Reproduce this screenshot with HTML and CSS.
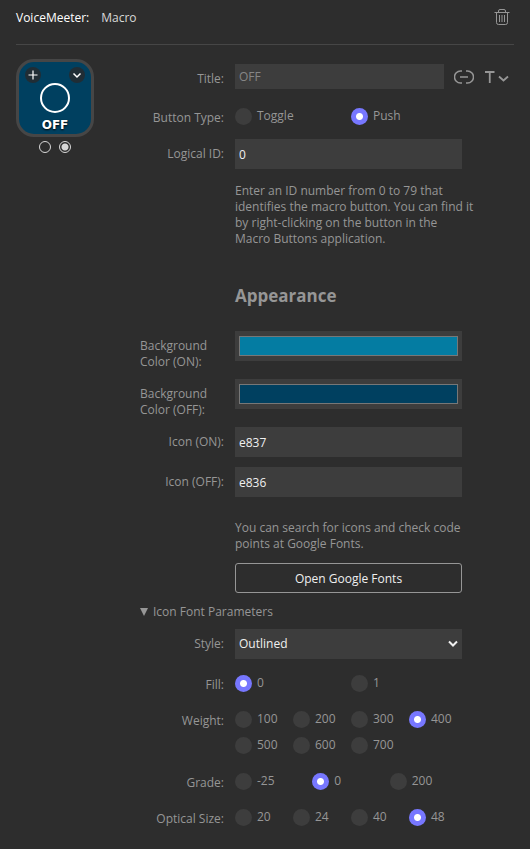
FILE: index.html
```html
<!DOCTYPE html>
<html lang="en">
<head>
<meta charset="utf-8">
<meta name="viewport" content="width=device-width, initial-scale=1">
<title>VoiceMeeter: Macro</title>
<link rel="stylesheet" href="styles.css">
</head>
<body>
<header class="header">
  <h1 class="crumb"><span class="crumb-plugin">VoiceMeeter:</span><span class="crumb-action">Macro</span></h1>
  <button class="icon-button" type="button" aria-label="Delete">
    <svg width="16" height="18" viewBox="0 0 16 18" fill="none" stroke="currentColor"><path d="M0.5 3.500h15M4.500 3V2a1.500 1.500 0 0 1 1.500-1.500h4a1.500 1.500 0 0 1 1.500 1.500V3M2.500 3.500v10a2 2 0 0 0 2 2h7a2 2 0 0 0 2-2v-10M5.500 6v7M8 6v7M10.500 6v7"/></svg>
  </button>
</header>
<main class="inspector">
  <section class="preview">
    <div class="key">
      <div class="key-tools">
        <button class="key-tool" type="button" aria-label="Add"><svg width="16" height="16" viewBox="0 0 16 16" fill="none" stroke="currentColor" stroke-width="1.200"><path d="M8 3.500v9M3.500 8h9"/></svg></button>
        <button class="key-tool" type="button" aria-label="Icon menu"><svg width="16" height="16" viewBox="0 0 16 16" fill="none" stroke="currentColor" stroke-width="1.500"><path d="M4.500 6.500L8 10l3.500-3.500"/></svg></button>
      </div>
      <svg class="key-icon" width="32" height="32" viewBox="0 0 32 32" fill="none" stroke="#fff" stroke-width="2"><circle cx="16" cy="16" r="14"/></svg>
      <span class="key-title">OFF</span>
    </div>
    <div class="states">
      <input class="state" type="radio" name="state" aria-label="State 1">
      <input class="state" type="radio" name="state" aria-label="State 2" checked>
    </div>
  </section>
  <form class="form">
    <div class="row title-row">
      <label class="label" for="title">Title:</label>
      <div class="title-field">
        <input class="input title-input" id="title" type="text" placeholder="OFF">
        <button class="icon-button" type="button" aria-label="Link title"><svg width="20" height="14" viewBox="0 0 20 14" fill="none" stroke="currentColor" stroke-width="1.500"><path d="M8 1H6.500a6 6 0 0 0 0 12H8M12 1h1.500a6 6 0 0 1 0 12H12M6 7h8"/></svg></button>
        <button class="icon-button" type="button" aria-label="Text style"><svg width="26" height="14" viewBox="0 0 26 14" fill="none" stroke="currentColor" stroke-width="1.800"><path d="M1 2h9.500M5.750 2v11M15 6.500l4.500 4 4.500-4"/></svg></button>
      </div>
    </div>
    <div class="row" role="radiogroup" aria-labelledby="l-type">
      <span class="label" id="l-type">Button Type:</span>
      <div class="radios two">
        <label class="choice"><input class="radio" type="radio" name="type">Toggle</label>
        <label class="choice"><input class="radio" type="radio" name="type" checked>Push</label>
      </div>
    </div>
    <div class="row">
      <label class="label" for="logical">Logical ID:</label>
      <input class="input" id="logical" type="text" value="0">
    </div>
    <p class="help id-help">Enter an ID number from 0 to 79 that<br>identifies the macro button. You can find it<br>by right-clicking on the button in the<br>Macro Buttons application.</p>
    <h2 class="heading">Appearance</h2>
    <div class="row">
      <label class="label" for="bg-on">Background Color (ON):</label>
      <input class="color" id="bg-on" type="color" value="#047ca2">
    </div>
    <div class="row">
      <label class="label" for="bg-off">Background Color (OFF):</label>
      <input class="color" id="bg-off" type="color" value="#004060">
    </div>
    <div class="row">
      <label class="label" for="icon-on">Icon (ON):</label>
      <input class="input" id="icon-on" type="text" value="e837">
    </div>
    <div class="row">
      <label class="label" for="icon-off">Icon (OFF):</label>
      <input class="input" id="icon-off" type="text" value="e836">
    </div>
    <p class="help icon-help">You can search for icons and check code points at Google Fonts.</p>
    <div class="row">
      <button class="button" type="button">Open Google Fonts</button>
    </div>
    <details class="params" open>
      <summary class="summary"><svg width="8" height="8" viewBox="0 0 8 8" fill="currentColor"><path d="M0 0h8L4 8z"/></svg>Icon Font Parameters</summary>
      <div class="row">
        <label class="label" for="style">Style:</label>
        <div class="select-wrap">
          <select class="input select" id="style"><option>Outlined</option><option>Rounded</option><option>Sharp</option></select>
          <svg class="select-arrow" width="10" height="8" viewBox="0 0 10 8" fill="none" stroke="currentColor" stroke-width="2"><path d="M1 1.500l4 4 4-4"/></svg>
        </div>
      </div>
      <div class="row" role="radiogroup" aria-labelledby="l-fill">
        <span class="label" id="l-fill">Fill:</span>
        <div class="radios two">
          <label class="choice"><input class="radio" type="radio" name="fill" checked>0</label>
          <label class="choice"><input class="radio" type="radio" name="fill">1</label>
        </div>
      </div>
      <div class="row" role="radiogroup" aria-labelledby="l-weight">
        <span class="label" id="l-weight">Weight:</span>
        <div class="radios four">
          <label class="choice"><input class="radio" type="radio" name="weight">100</label>
          <label class="choice"><input class="radio" type="radio" name="weight">200</label>
          <label class="choice"><input class="radio" type="radio" name="weight">300</label>
          <label class="choice"><input class="radio" type="radio" name="weight" checked>400</label>
          <label class="choice"><input class="radio" type="radio" name="weight">500</label>
          <label class="choice"><input class="radio" type="radio" name="weight">600</label>
          <label class="choice"><input class="radio" type="radio" name="weight">700</label>
        </div>
      </div>
      <div class="row" role="radiogroup" aria-labelledby="l-grade">
        <span class="label" id="l-grade">Grade:</span>
        <div class="radios three">
          <label class="choice"><input class="radio" type="radio" name="grade">-25</label>
          <label class="choice"><input class="radio" type="radio" name="grade" checked>0</label>
          <label class="choice"><input class="radio" type="radio" name="grade">200</label>
        </div>
      </div>
      <div class="row" role="radiogroup" aria-labelledby="l-size">
        <span class="label" id="l-size">Optical Size:</span>
        <div class="radios four">
          <label class="choice"><input class="radio" type="radio" name="size">20</label>
          <label class="choice"><input class="radio" type="radio" name="size">24</label>
          <label class="choice"><input class="radio" type="radio" name="size">40</label>
          <label class="choice"><input class="radio" type="radio" name="size" checked>48</label>
        </div>
      </div>
    </details>
  </form>
</main>
</body>
</html>
```
FILE: styles.css
```css
* {
  box-sizing: border-box;
}

body {
  margin: 0;
  padding: 0 16px;
  background: #2d2d2d;
  color: #969696;
  font: 12px/16px "Segoe UI", "Open Sans", "Noto Sans", sans-serif;
}

button,
input,
select {
  margin: 0;
  font: inherit;
}

.header {
  display: flex;
  align-items: center;
  justify-content: space-between;
  padding: 9px 4px 17px 0;
  border-bottom: 1px solid #464646;
}

.crumb {
  display: flex;
  gap: 12px;
  margin: 0;
  font-size: 12px;
  color: #d8d8d8;
}

.crumb-plugin {
  font-weight: 500;
  color: #fff;
}

.crumb-action {
  font-weight: 400;
}

.icon-button {
  display: flex;
  flex: none;
  padding: 0;
  border: 0;
  background: none;
  color: #969696;
}

.inspector {
  display: flex;
  gap: 46px;
  padding-top: 14px;
}

.preview {
  flex: none;
}

.key {
  display: flex;
  flex-direction: column;
  align-items: center;
  width: 78px;
  height: 78px;
  padding: 5px 6px;
  border: 3px solid #464646;
  border-radius: 18px;
  background: #004060;
}

.key-tools {
  display: flex;
  justify-content: space-between;
  align-self: stretch;
}

.key-tool {
  display: flex;
  padding: 0;
  border: 0;
  border-radius: 50%;
  background: #202d35;
  color: #fff;
}

.key-icon {
  flex: none;
  margin-top: -1px;
}

.key-title {
  margin-top: 2px;
  font: 700 12px/18px "DejaVu Sans", sans-serif;
  color: #fff;
  text-shadow: 0 1px 2px #000;
}

.states {
  display: flex;
  justify-content: center;
  gap: 8px;
  padding-top: 4px;
}

.state {
  appearance: none;
  width: 12px;
  height: 12px;
  border: 1px solid #d8d8d8;
  border-radius: 50%;
}

.state:checked {
  background: radial-gradient(circle, #d8d8d8 3px, transparent 4px);
}

.form {
  flex: 1;
  min-width: 0;
  padding: 5px 52px 16px 0;
}

.row {
  display: grid;
  grid-template-columns: 84px minmax(0, 1fr);
  column-gap: 11px;
  align-items: start;
  margin-bottom: 10px;
}

.title-row {
  margin-bottom: 14px;
}

.label {
  justify-self: end;
  margin-bottom: -1px;
  padding-top: 7px;
}

.title-field {
  display: flex;
  align-items: center;
  gap: 10px;
  margin-right: -48px;
}

.input {
  width: 100%;
  height: 30px;
  padding: 0 4px;
  border: 0;
  border-radius: 0;
  background: #3d3d3d;
  color: #f0f0f0;
}

.title-input {
  flex: 1;
  min-width: 0;
  height: 25px;
}

.title-input::placeholder {
  color: #868686;
}

.color {
  appearance: none;
  width: 100%;
  height: 30px;
  padding: 5px 4px;
  border: 0;
  background: #3d3d3d;
}

.color::-webkit-color-swatch-wrapper {
  padding: 0;
}

.color::-webkit-color-swatch {
  border: 1px solid #777;
}

.help {
  margin: 0 -16px 0 95px;
}

.id-help {
  padding: 4px 0 38px;
}

.icon-help {
  padding: 13px 0 11px;
}

.heading {
  margin: 0 0 24px 95px;
  font-size: 17px;
  line-height: 22px;
  font-weight: 700;
}

.button {
  grid-column: 2;
  height: 30px;
  padding: 1px 6px 0;
  border: 1px solid #969696;
  border-radius: 3px;
  background: none;
  color: #f0f0f0;
}

.params {
  padding-top: 1px;
}

.summary {
  display: flex;
  align-items: center;
  gap: 5px;
  margin-bottom: 9px;
  font-weight: 500;
  list-style: none;
}

.select-wrap {
  position: relative;
  padding-bottom: 1px;
}

.select {
  display: block;
  appearance: none;
}

.select-arrow {
  position: absolute;
  top: 11px;
  right: 4px;
  color: #f0f0f0;
  pointer-events: none;
}

.radios {
  display: grid;
  column-gap: 5px;
}

.two {
  grid-template-columns: repeat(2, minmax(0, 1fr));
}

.three {
  grid-template-columns: repeat(3, minmax(0, 1fr));
}

.four {
  grid-template-columns: repeat(4, minmax(0, 1fr));
}

.choice {
  display: flex;
  align-items: center;
  gap: 5px;
  height: 26px;
}

.radio {
  appearance: none;
  flex: none;
  width: 17px;
  height: 17px;
  border-radius: 50%;
  background: #3d3d3d;
}

.radio:checked {
  background: radial-gradient(circle, #fff 3px, #7777ff 4px);
}
```
